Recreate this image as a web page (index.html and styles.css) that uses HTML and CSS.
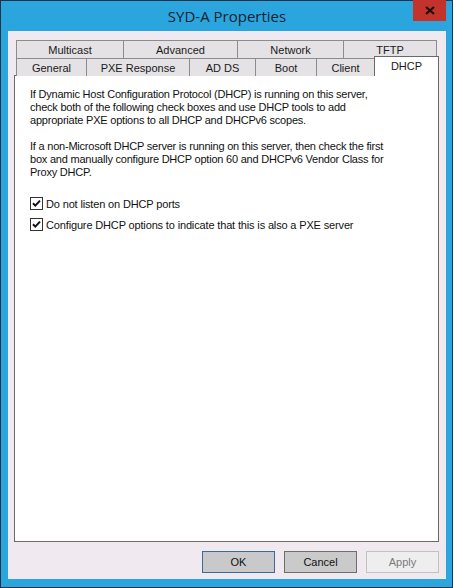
FILE: index.html
```html
<!DOCTYPE html>
<html>
<head>
<meta charset="utf-8">
<link rel="stylesheet" href="styles.css">
</head>
<body>
<div class="window">
  <div class="titlebar">
    <span class="title">SYD-A Properties</span>
    <button class="close" aria-label="Close">
      <svg width="10" height="9" viewBox="0 0 10 9"><path d="M1 1 L9 8 M9 1 L1 8" stroke="#1a1010" stroke-width="2.2" fill="none"/></svg>
    </button>
  </div>
  <div class="client">
    <div class="tabs">
      <div class="tabrow row-back">
        <div class="tab">Multicast</div>
        <div class="tab">Advanced</div>
        <div class="tab">Network</div>
        <div class="tab">TFTP</div>
      </div>
      <div class="tabrow row-front">
        <div class="tab">General</div>
        <div class="tab">PXE Response</div>
        <div class="tab">AD DS</div>
        <div class="tab">Boot</div>
        <div class="tab">Client</div>
        <div class="tab selected">DHCP</div>
      </div>
    </div>
    <div class="panel">
      <p class="para">If Dynamic Host Configuration Protocol (DHCP) is running on this server,<br>check both of the following check boxes and use DHCP tools to add<br>appropriate PXE options to all DHCP and DHCPv6 scopes.</p>
      <p class="para">If a non-Microsoft DHCP server is running on this server, then check the first<br>box and manually configure DHCP option 60 and DHCPv6 Vendor Class for<br>Proxy DHCP.</p>
      <label class="check first">
        <svg class="box" width="13" height="13" viewBox="0 0 13 13"><rect x="0.5" y="0.5" width="12" height="12" fill="#fff" stroke="#333"/><path d="M3 6.2 L5.3 8.6 L10 3.6" stroke="#111" stroke-width="2" fill="none"/></svg>
        <span>Do not listen on DHCP ports</span>
      </label>
      <label class="check">
        <svg class="box" width="13" height="13" viewBox="0 0 13 13"><rect x="0.5" y="0.5" width="12" height="12" fill="#fff" stroke="#333"/><path d="M3 6.2 L5.3 8.6 L10 3.6" stroke="#111" stroke-width="2" fill="none"/></svg>
        <span>Configure DHCP options to indicate that this is also a PXE server</span>
      </label>
    </div>
    <div class="buttons">
      <button class="btn default">OK</button>
      <button class="btn">Cancel</button>
      <button class="btn disabled">Apply</button>
    </div>
  </div>
</div>
</body>
</html>
```

FILE: styles.css
```css
html, body {
  margin: 0;
  padding: 0;
  background: #1b2430;
}
body {
  width: 453px;
  height: 588px;
  overflow: hidden;
}
.window {
  box-sizing: border-box;
  width: 453px;
  height: 588px;
  background: #2ba5de;
  border: 1px solid #1d3446;
  display: flex;
  flex-direction: column;
  padding: 0 6px 8px 7px;
}
.titlebar {
  height: 30px;
  position: relative;
  display: flex;
  align-items: center;
  justify-content: center;
}
.title {
  font-family: "Open Sans", "Noto Sans", sans-serif;
  font-size: 15px;
  color: #15222e;
  margin-top: -1px;
}
.close {
  position: absolute;
  top: -1px;
  right: 0;
  width: 33px;
  height: 21px;
  border: none;
  padding: 0;
  background: #c4332b;
  display: flex;
  align-items: center;
  justify-content: center;
}
.client {
  flex: 1;
  background: #f0eaf0;
  display: flex;
  flex-direction: column;
  padding: 9px 7px 0 6px;
  font-family: "Liberation Sans", Arial, sans-serif;
  font-size: 11px;
  color: #111;
}
.tabs {
  display: flex;
  flex-direction: column;
  margin-left: 2px;
  position: relative;
  z-index: 1;
}
.tabrow {
  display: grid;
}
.row-back {
  grid-template-columns: 107px 114px 106px 94px;
  height: 18px;
}
.row-front {
  grid-template-columns: 70px 103px 66px 61px 58px 65px;
  height: 17px;
}
.tab {
  box-sizing: border-box;
  background: #e4e2e4;
  border: 1px solid #8c8c8c;
  border-right: none;
  border-bottom: none;
  display: flex;
  align-items: center;
  justify-content: center;
  color: #1a1a1a;
  padding-top: 1px;
}
.row-back .tab:last-child {
  border-right: 1px solid #8c8c8c;
}
.row-front .tab {
  border-top: 1px solid #8c8c8c;
}
.tab.selected {
  background: #fff;
  border: 1px solid #6a6a6a;
  border-bottom: none;
  margin-top: -2px;
  height: 20px;
  align-items: flex-start;
  padding-top: 3px;
}
.panel {
  box-sizing: border-box;
  height: 467px;
  background: #fff;
  border: 1px solid #6a6a6a;
  padding: 12px 0 0 15px;
}
.para {
  margin: 0 0 13px 0;
  line-height: 13px;
  letter-spacing: -0.22px;
}
.check {
  display: flex;
  align-items: center;
  gap: 3px;
  height: 13px;
  margin-bottom: 8px;
  letter-spacing: -0.15px;
}
.check.first {
  margin-top: 18px;
}
.box {
  display: block;
  flex: none;
}
.buttons {
  display: flex;
  justify-content: flex-end;
  gap: 9px;
  padding-top: 9px;
}
.btn {
  box-sizing: border-box;
  width: 73px;
  height: 22px;
  font-family: "Liberation Sans", Arial, sans-serif;
  font-size: 11px;
  color: #111;
  background: #cacaca;
  border: 1px solid #6e6e6e;
  padding: 0;
}
.btn.default {
  border: 1px solid #3a6a9c;
  background: #c9c9cb;
}
.btn.disabled {
  background: #eeeeee;
  border: 1px solid #c2c2c2;
  color: #7a7a7a;
}
```
